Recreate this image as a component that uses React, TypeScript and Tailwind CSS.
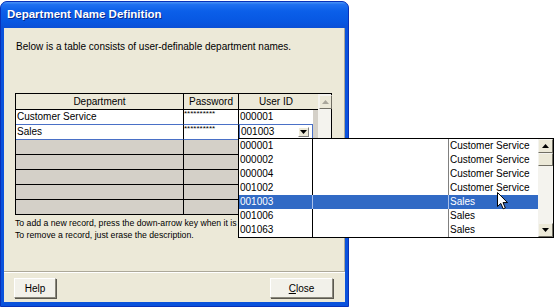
import React from 'react'

const ids = ['000001', '000002', '000004', '001002', '001003', '001006', '001063']
const names = ['Customer Service', 'Customer Service', 'Customer Service', 'Customer Service', 'Sales', 'Sales', 'Sales']

function Tri({ up, dim }: { up?: boolean; dim?: boolean }) {
  return (
    <svg width="7" height="4" viewBox="0 0 7 4" className="block">
      {up ? (
        <path d="M3.5 0 L7 4 L0 4 Z" fill={dim ? '#a9a69a' : '#000'} />
      ) : (
        <path d="M0 0 L7 0 L3.5 4 Z" fill={dim ? '#a9a69a' : '#000'} />
      )}
    </svg>
  )
}

function ScrollBtn({ up, dim, className }: { up?: boolean; dim?: boolean; className?: string }) {
  return (
    <div
      className={`flex items-center justify-center bg-[#ece9d8] border-t border-l border-t-[#f4f3ee] border-l-[#f4f3ee] border-r border-b border-r-[#716f64] border-b-[#716f64] ${className ?? ''}`}
    >
      <Tri up={up} dim={dim} />
    </div>
  )
}

function GridRow({ dept, pass, uid, gray, sel, topSel }: { dept?: string; pass?: string; uid?: React.ReactNode; gray?: boolean; sel?: boolean; topSel?: boolean }) {
  const bg = gray ? 'bg-[#d4d0c8]' : 'bg-white'
  const line = sel || topSel ? 'border-b-[#4a70c6]' : 'border-b-black'
  return (
    <div className="flex h-[15px]">
      <div className={`w-[168px] border-r border-r-black border-b ${line} ${bg} pl-[1px] text-[10px] leading-[14px] text-black`}>{dept}</div>
      <div className={`w-[55px] border-r border-r-black border-b ${line} ${bg} text-[8px] leading-[8px] text-black overflow-hidden`}>{pass}</div>
      <div className={`w-[74px] border-b border-b-black ${bg}`}>{uid}</div>
      <div className="w-[5px] bg-[#d4d0c8]" />
    </div>
  )
}

export default function App() {
  return (
    <div className="relative w-[554px] h-[308px] bg-white overflow-hidden font-['Liberation_Sans',Arial,sans-serif]">
      {/* Dialog window */}
      <div className="mt-[1px] w-[349px] h-[306px] flex flex-col rounded-t-[7px] bg-[#0a52dc] border border-[#0831b8]">
        <div className="h-[26px] shrink-0 rounded-t-[6px] bg-[linear-gradient(to_bottom,#4a94f6_0%,#1f70f0_10%,#0b5fe9_35%,#0757e2_75%,#0a4fd6_100%)] flex items-center pl-[6px]">
          <span className="text-white font-bold text-[11.5px] [text-shadow:1px_1px_0_#0a2a8a]">Department Name Definition</span>
        </div>

        <div className="flex-1 mx-[3px] mb-[4px] bg-[#ece9d8] flex flex-col">
          {/* upper panel */}
          <div className="h-[244px] border-b border-r border-[#aca899] shadow-[0_1px_0_#ffffff] flex flex-col">
            <p className="pt-[13px] pl-[12px] text-[10px] leading-[12px] text-black">
              Below is a table consists of user-definable department names.
            </p>

            <div className="mt-[40px] ml-[11px] flex w-[316px]">
              {/* grid */}
              <div className="flex flex-col border-l border-t border-black">
                <div className="flex h-[16px] bg-[#ece9d8] text-[10px] leading-[15px] text-black">
                  <div className="w-[168px] border-r border-b border-black text-center">Department</div>
                  <div className="w-[55px] border-r border-b border-black text-center">Password</div>
                  <div className="w-[74px] border-b border-black text-center">User ID</div>
                  <div className="w-[5px] border-b border-black" />
                </div>
                <GridRow
                  dept="Customer Service"
                  pass="**********"
                  topSel
                  uid={<div className="pl-[1px] text-[10px] leading-[14px] text-black">000001</div>}
                />
                <GridRow
                  dept="Sales"
                  pass="**********"
                  sel
                  uid={
                    <div className="h-[15px] -mt-[1px] border border-[#4a70c6] flex items-center pl-[1px] pr-[3px] bg-white">
                      <span className="flex-1 text-[10px] leading-[13px] text-black">001003</span>
                      <div className="w-[11px] h-[10px] flex items-center justify-center bg-[#ece9d8] border-t border-l border-white border-r border-b border-r-[#808080] border-b-[#808080]">
                        <Tri />
                      </div>
                    </div>
                  }
                />
                <GridRow gray />
                <GridRow gray />
                <GridRow gray />
                <GridRow gray />
                <GridRow gray />
              </div>
              {/* scrollbar */}
              <div className="w-[14px] flex flex-col bg-[#f4f3ee] border-t border-r border-b border-black">
                <ScrollBtn up dim className="h-[14px] w-[13px] ml-[1px] mt-[1px]" />
              </div>
            </div>

            <div className="mt-[2px] pl-[11px] text-[8.7px] leading-[12px] text-black">
              <p>To add a new record, press the down-arrow key when it is at</p>
              <p>To remove a record, just erase the description.</p>
            </div>
          </div>

          {/* buttons */}
          <div className="flex justify-between items-start pt-[6px] pl-[10px] pr-[12px]">
            <button className="w-[42px] h-[20px] bg-[#f2f1ea] border-t border-l border-white border-r border-b border-r-[#8a887c] border-b-[#8a887c] shadow-[1px_1px_0_#5a5850] text-[10px] text-black">
              Help
            </button>
            <button className="w-[63px] h-[20px] bg-[#f2f1ea] border-t border-l border-white border-r border-b border-r-[#8a887c] border-b-[#8a887c] shadow-[1px_1px_0_#5a5850] text-[10px] text-black">
              <span className="underline">C</span>lose
            </button>
          </div>
        </div>
      </div>

      {/* Dropdown list overlay */}
      <div className="absolute left-[238px] top-[138px] w-[316px] h-[100px] border border-black bg-white flex">
        <div className="flex flex-col w-[299px]">
          {ids.map((id, i) => {
            const hl = i === 4
            return (
              <div key={id} className={`flex h-[14px] text-[10px] leading-[14px] ${hl ? 'bg-[#316ac5] text-white' : 'text-black'}`}>
                <div className={`w-[74px] pl-[1px] border-r ${hl ? 'border-[#a9c0ea]' : 'border-black'}`}>{id}</div>
                <div className={`w-[136px] border-r ${hl ? 'border-[#a9c0ea]' : 'border-[#808080]'}`} />
                <div className="flex-1 pl-[1px]">{names[i]}</div>
              </div>
            )
          })}
        </div>
        <div className="flex-1 flex flex-col bg-[#f4f3ee]">
          <ScrollBtn up className="h-[14px]" />
          <div className="h-[13px] bg-[#ece9d8] border-t border-l border-[#f4f3ee] border-r border-b border-r-[#716f64] border-b-[#716f64]" />
          <div className="flex-1" />
          <ScrollBtn className="h-[14px]" />
        </div>
      </div>

      {/* mouse pointer */}
      <svg className="absolute left-[497px] top-[192px]" width="12" height="18" viewBox="0 0 12 18">
        <path d="M0.5 0.5 L0.5 14.5 L3.8 11.4 L6.2 16.8 L8.3 15.9 L6 10.6 L10.5 10.6 Z" fill="#fff" stroke="#000" strokeWidth="1" strokeLinejoin="miter" />
      </svg>
    </div>
  )
}
